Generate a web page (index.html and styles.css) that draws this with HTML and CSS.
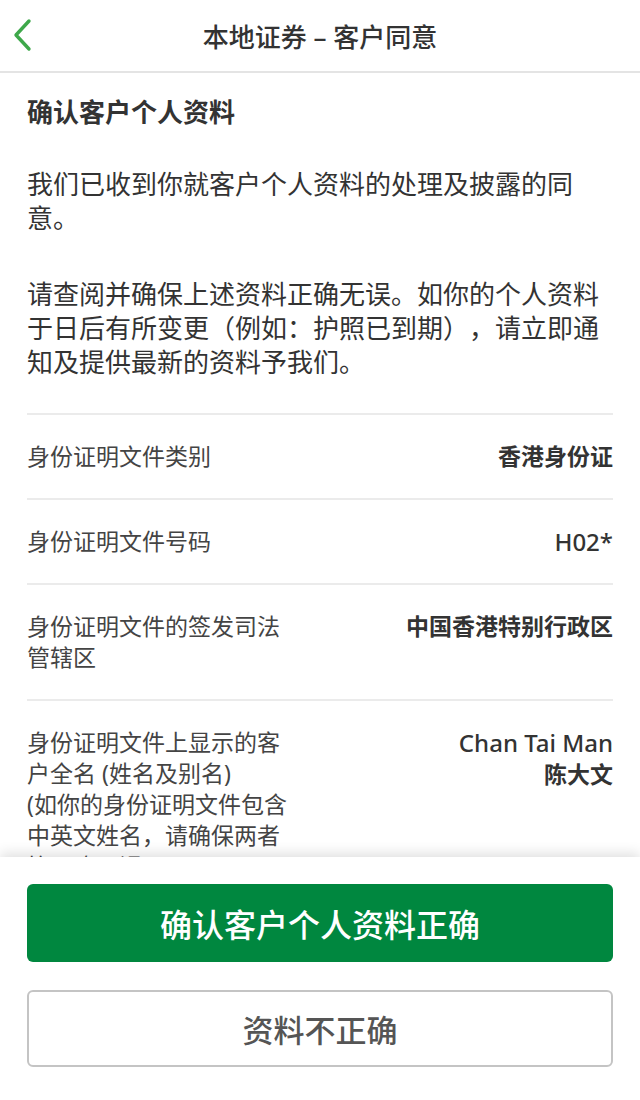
FILE: index.html
```html
<!DOCTYPE html>
<html lang="zh-Hans">
<head>
    <meta charset="UTF-8">
    <meta name="viewport" content="width=device-width, initial-scale=1.0">
    <title>本地证券 – 客户同意</title>
    <link rel="stylesheet" href="styles.css">
</head>
<body>
    <div class="page">
        <header class="topbar">
            <a class="back" href="#" aria-label="返回">
                <svg width="22" height="34" viewBox="0 0 22 34">
                    <polyline points="17,3 4,17 17,31" fill="none" stroke="#3ea84a" stroke-width="3.4" stroke-linecap="round" stroke-linejoin="round"/>
                </svg>
            </a>
            <h1>本地证券 – 客户同意</h1>
        </header>

        <main class="content">
            <h2>确认客户个人资料</h2>
            <p class="intro">我们已收到你就客户个人资料的处理及披露的同意。</p>
            <p class="intro second">请查阅并确保上述资料正确无误。如你的个人资料于日后有所变更（例如：护照已到期），请立即通知及提供最新的资料予我们。</p>

            <div class="details">
                <div class="row">
                    <div class="label">身份证明文件类别</div>
                    <div class="value">香港身份证</div>
                </div>
                <div class="row">
                    <div class="label">身份证明文件号码</div>
                    <div class="value latin">H02*</div>
                </div>
                <div class="row">
                    <div class="label">身份证明文件的签发司法管辖区</div>
                    <div class="value">中国香港特别行政区</div>
                </div>
                <div class="row">
                    <div class="label">身份证明文件上显示的客户全名 (姓名及别名)<br>(如你的身份证明文件包含中英文姓名，请确保两者均正确无误)</div>
                    <div class="value"><span class="latin">Chan Tai Man</span><br>陈大文</div>
                </div>
            </div>
        </main>

        <footer class="actions">
            <button class="btn btn-primary">确认客户个人资料正确</button>
            <button class="btn btn-secondary">资料不正确</button>
        </footer>
    </div>
</body>
</html>
```

FILE: styles.css
```css
/* Global */
html, body {
    margin: 0;
    padding: 0;
}

body {
    font-family: "Noto Sans", "Noto Sans CJK SC", sans-serif;
    color: #333;
    background-color: #fff;
    text-spacing-trim: space-all;
}

.page {
    height: 1100px;
    display: flex;
    flex-direction: column;
    overflow: hidden;
}

/* Top bar */
.topbar {
    height: 71px;
    flex: none;
    display: flex;
    align-items: center;
    justify-content: center;
    position: relative;
    border-bottom: 2px solid #e4e4e4;
}

.topbar h1 {
    margin: 0;
    font-size: 26px;
    font-weight: 500;
    color: #333;
}

.back {
    position: absolute;
    left: 12px;
    top: 18px;
    display: block;
    line-height: 0;
}

/* Scrolling content */
.content {
    flex: 1;
    overflow: hidden;
    padding: 0 27px;
}

.content h2 {
    margin: 24px 0 0;
    font-size: 26px;
    line-height: 30px;
    font-weight: 600;
    color: #333;
}

.intro {
    margin: 40px 0 0;
    font-size: 26px;
    line-height: 34px;
    color: #333;
}

.intro.second {
    margin-top: 42px;
}

.details {
    margin-top: 34px;
}

.row {
    display: flex;
    justify-content: space-between;
    gap: 20px;
    padding: 26px 0;
    border-top: 2px solid #ebebeb;
    font-size: 23px;
    line-height: 31px;
}

.label {
    width: 272px;
    flex: none;
    color: #444;
}

.value {
    text-align: right;
    font-weight: 700;
    color: #333;
}

.value.latin,
.value .latin {
    font-size: 24px;
    font-weight: 500;
}

/* Bottom actions */
.actions {
    flex: none;
    height: 243px;
    box-sizing: border-box;
    padding: 27px 27px 0;
    display: flex;
    flex-direction: column;
    gap: 28px;
    background-color: #fff;
    box-shadow: 0 -4px 12px rgba(0, 0, 0, 0.12);
    position: relative;
}

.btn {
    height: 78px;
    border-radius: 6px;
    font-family: inherit;
    font-size: 31px;
    font-weight: 500;
    cursor: pointer;
}

.btn-primary {
    background-color: #00873f;
    border: none;
    color: #fff;
    font-size: 32px;
}

.btn-secondary {
    height: 77px;
    background-color: #fff;
    border: 2px solid #c4c4c4;
    color: #555;
}
```
